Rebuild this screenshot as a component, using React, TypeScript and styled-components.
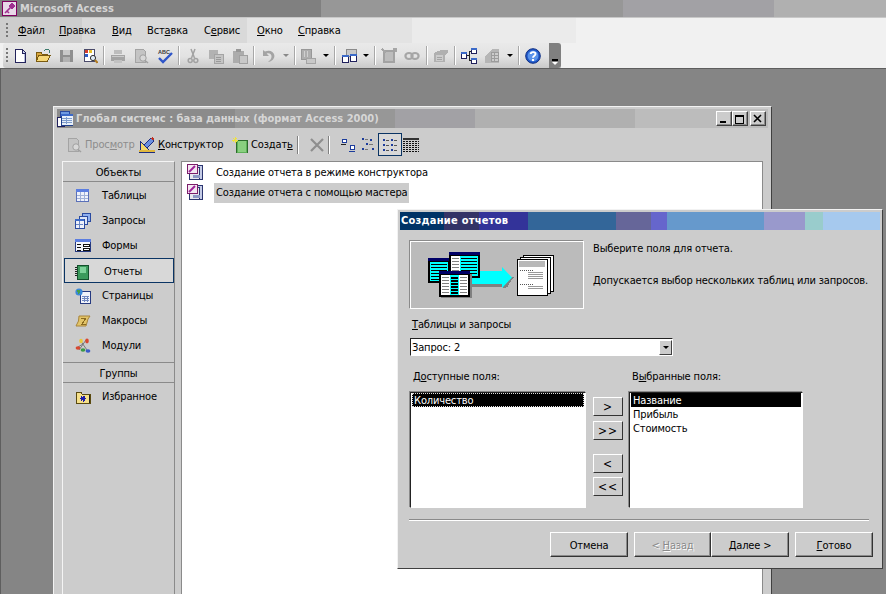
import React from "react";
import styled, { createGlobalStyle } from "styled-components";

const FONT = `"DejaVu Sans Condensed", "DejaVu Sans", "Noto Sans", sans-serif`;

const Global = createGlobalStyle`
  html, body { margin: 0; padding: 0; width: 886px; height: 594px; overflow: hidden; background: #858585; }
  * { box-sizing: border-box; }
  #root { width: 886px; height: 594px; }
`;

/* Hard-edged colour bands of the palette-reduced title bars: [end x, colour] pairs */
const bands = (stops: [number, string][]) => {
  let from = 0;
  const parts = stops.map(([to, c]) => {
    const s = `${c} ${from}px ${to}px`;
    from = to;
    return s;
  });
  return `linear-gradient(90deg, ${parts.join(", ")})`;
};

const Screen = styled.div`
  width: 886px;
  height: 594px;
  display: flex;
  flex-direction: column;
  overflow: hidden;
  font: 11px/14px ${FONT};
  letter-spacing: -0.15px;
  color: #000;
`;

const AppTitle = styled.div`
  height: 17px;
  flex: none;
  display: flex;
  align-items: center;
  gap: 2px;
  padding-left: 2px;
  background: ${bands([[321, "#808080"], [623, "#979797"], [774, "#a2a1a5"], [886, "#b0b0b0"]])};
`;

const AppTitleText = styled.span`
  font: bold 11px/16px ${FONT};
  color: #d4d4d4;
  letter-spacing: 0;
`;

const MenuBar = styled.div`
  height: 26px;
  flex: none;
  display: flex;
  align-items: center;
  padding-left: 6px;
  border-top: 1px solid #c8c8c8;
  background: ${bands([[82, "#cdcdcd"], [247, "#d9d9d9"], [412, "#e3e3e3"], [576, "#ebebeb"], [886, "#f1f1f1"]])};
`;

const Grip = styled.span`
  width: 2px;
  height: 15px;
  flex: none;
  background: repeating-linear-gradient(180deg, #777 0 2px, transparent 2px 4px);
`;

const MenuItem = styled.span<{ $w: number }>`
  width: ${(p) => p.$w}px;
  flex: none;
  text-align: left;
`;

const MenuList = styled.div`
  display: flex;
  margin-left: 10px;
`;

const Key = styled.span`
  text-decoration: underline;
  text-underline-offset: 1px;
`;

const ToolRow = styled.div`
  height: 26px;
  flex: none;
  background: #f1f1f1;
  border-bottom: 1px solid #5e5e5e;
`;

const ToolStrip = styled.div`
  width: 558px;
  height: 25px;
  margin-left: 3px;
  padding-left: 3px;
  display: flex;
  align-items: center;
  border-radius: 3px 0 0 3px;
  background: linear-gradient(180deg, #e9e9e9 0%, #e2e2e2 55%, #c9c9c9 100%);
`;

const ToolBtn = styled.span`
  width: 23.33px;
  height: 22px;
  flex: none;
  display: flex;
  align-items: center;
  justify-content: center;
`;

const ToolSep = styled.span`
  width: 5px;
  height: 19px;
  flex: none;
  &::after {
    content: "";
    display: block;
    width: 1px;
    height: 100%;
    margin: 0 auto;
    background: #a8a8a8;
    box-shadow: 1px 0 0 #fff;
  }
`;

const Drop = styled.span<{ $light?: boolean }>`
  width: 12px;
  height: 22px;
  flex: none;
  display: flex;
  align-items: center;
  justify-content: center;
  &::after {
    content: "";
    border-left: 3px solid transparent;
    border-right: 3px solid transparent;
    border-top: 3px solid ${(p) => (p.$light ? "#888" : "#000")};
  }
`;

const Chevron = styled.span`
  width: 12px;
  height: 25px;
  margin-left: auto;
  flex: none;
  border-radius: 0 3px 3px 0;
  background: #808080;
  display: flex;
  flex-direction: column;
  align-items: center;
  justify-content: flex-end;
  padding-bottom: 3px;
  &::before {
    content: "";
    width: 6px;
    height: 2px;
    background: #000;
    margin-bottom: 1px;
  }
  &::after {
    content: "";
    border-left: 3px solid transparent;
    border-right: 3px solid transparent;
    border-top: 3px solid #fff;
  }
`;

const Desktop = styled.div`
  flex: 1;
  position: relative;
  background: #858585;
  border-left: 1px solid #5e5e5e;
`;

const DbWindow = styled.section`
  position: absolute;
  left: 52px;
  top: 37px;
  width: 719px;
  height: 500px;
  padding: 2px 3px 0;
  background: #cccccc;
  border-top: 1px solid #f2f2f2;
  border-left: 1px solid #f2f2f2;
  border-right: 1px solid #404040;
  display: flex;
  flex-direction: column;
`;

const DbTitle = styled.header`
  height: 19px;
  flex: none;
  display: flex;
  align-items: center;
  padding-right: 2px;
  background: ${bands([[178, "#8b8b8b"], [338, "#979797"], [418, "#a2a1a5"], [578, "#b0b0b0"], [720, "#bcbcbc"]])};
`;

const DbTitleText = styled.span`
  font: bold 11px/16px ${FONT};
  color: #d6d6d6;
  margin-left: 3px;
  white-space: nowrap;
  letter-spacing: 0;
`;

const CaptionGroup = styled.div`
  margin-left: auto;
  display: flex;
`;

const CaptionBtn = styled.span<{ $gap?: number }>`
  width: 16px;
  height: 15px;
  margin-left: ${(p) => p.$gap ?? 0}px;
  background: #cccccc;
  border: 1px solid;
  border-color: #fff #404040 #404040 #fff;
  box-shadow: inset -1px -1px 0 #8a8a8a;
  display: flex;
  align-items: center;
  justify-content: center;
`;

const DbTools = styled.div`
  height: 33px;
  flex: none;
  display: flex;
  align-items: center;
  padding-left: 9px;
`;

const DbTool = styled.span<{ $w: number; $off?: boolean }>`
  width: ${(p) => p.$w}px;
  flex: none;
  display: flex;
  align-items: center;
  gap: 3px;
  color: ${(p) => (p.$off ? "#8c8c8c" : "#000")};
  white-space: nowrap;
`;

const DbSep = styled.span<{ $w: number }>`
  width: ${(p) => p.$w}px;
  height: 18px;
  flex: none;
  &::before {
    content: "";
    display: block;
    width: 1px;
    height: 100%;
    background: #808080;
    box-shadow: 1px 0 0 #fff;
  }
`;

const ViewBtn = styled.span<{ $w: number; $on?: boolean }>`
  width: ${(p) => p.$w}px;
  height: 23px;
  flex: none;
  display: flex;
  align-items: center;
  justify-content: center;
  border: 1px solid ${(p) => (p.$on ? "#0a3464" : "transparent")};
  background: ${(p) => (p.$on ? "#d8d8d8" : "transparent")};
`;

const DbBody = styled.div`
  flex: 1;
  display: flex;
  gap: 6px;
  padding: 0 5px;
`;

const Panel = styled.nav`
  width: 113px;
  flex: none;
  border-top: 1px solid #f4f4f4;
  border-left: 1px solid #f4f4f4;
  border-right: 1px solid #8a8a8a;
  display: flex;
  flex-direction: column;
`;

const PanelHead = styled.div<{ $top?: boolean }>`
  height: ${(p) => (p.$top ? 20 : 21)}px;
  flex: none;
  display: flex;
  align-items: center;
  justify-content: center;
  padding-top: 2px;
  border-bottom: 1px solid #8a8a8a;
  ${(p) => (p.$top ? "" : "border-top: 1px solid #8a8a8a; margin-top: 4px;")}
`;

const PanelItems = styled.div<{ $first?: boolean }>`
  padding-top: ${(p) => (p.$first ? 1 : 0)}px;
  display: flex;
  flex-direction: column;
`;

const PanelItem = styled.div<{ $on?: boolean; $low?: boolean }>`
  height: 25px;
  display: flex;
  align-items: center;
  padding-left: ${(p) => (p.$on ? 9 : 11)}px;
  padding-top: ${(p) => (p.$low ? 2 : 0)}px;
  gap: ${(p) => (p.$on ? 14 : 11)}px;
  margin-left: ${(p) => (p.$on ? 1 : 0)}px;
  border: 1px solid ${(p) => (p.$on ? "#0a3464" : "transparent")};
  background: ${(p) => (p.$on ? "#d8d8d8" : "transparent")};
`;

const ListPane = styled.div`
  flex: 1;
  background: #fff;
  border-top: 1px solid #8a8a8a;
  border-left: 1px solid #8a8a8a;
  border-right: 1px solid #8a8a8a;
  padding: 1px 0 0 5px;
  display: flex;
  flex-direction: column;
`;

const ListRow = styled.div`
  height: 20px;
  display: flex;
  align-items: center;
  gap: 12px;
`;

const RowIcon = styled.span`
  display: block;
  margin-top: -3px;
`;

const RowLabel = styled.span<{ $on?: boolean }>`
  height: 20px;
  line-height: 20px;
  padding: 0 2px;
  margin-left: -1px;
  white-space: nowrap;
  background: ${(p) => (p.$on ? "#cccccc" : "transparent")};
`;

const Wizard = styled.section`
  position: absolute;
  left: 396px;
  top: 140px;
  width: 486px;
  height: 360px;
  padding: 2px;
  background: #cccccc;
  border: 1px solid;
  border-color: #f2f2f2 #404040 #404040 #f2f2f2;
  display: flex;
  flex-direction: column;
`;

const WizardTitle = styled.header`
  height: 18px;
  flex: none;
  display: flex;
  align-items: center;
  padding-left: 1px;
  font: bold 11px/14px ${FONT};
  letter-spacing: 0.25px;
  color: #fff;
  background: ${bands([[44, "#003366"], [79, "#333366"], [128, "#333399"], [216, "#336699"], [251, "#666699"], [267, "#6666cc"], [364, "#6699cc"], [405, "#9999cc"], [423, "#99cccc"], [480, "#a6c9ee"]])};
`;

const WizardBody = styled.div`
  flex: 1;
  padding: 10px 0 0 9px;
  display: flex;
  flex-direction: column;
`;

const IntroRow = styled.div`
  display: flex;
  gap: 9px;
  height: 69px;
`;

const Picture = styled.div`
  width: 175px;
  height: 69px;
  flex: none;
  background: #bbbbbb;
  border: 1px solid;
  border-color: #8a8a8a #fff #fff #8a8a8a;
  box-shadow: inset 1px 1px 0 #fff;
`;

const IntroText = styled.div`
  display: flex;
  flex-direction: column;
  gap: 16px;
  padding-top: 1px;
  line-height: 16px;
`;

const Caption = styled.label<{ $mt: number }>`
  display: block;
  height: 16px;
  margin-top: ${(p) => p.$mt}px;
  padding-left: 3px;
  line-height: 18px;
`;

const Combo = styled.div`
  margin: 6px 0 0 1px;
  width: 263px;
  height: 18px;
  flex: none;
  background: #fff;
  border: 1px solid;
  border-color: #222 #fff #fff #222;
  display: flex;
  align-items: center;
  padding-left: 1px;
`;

const ComboText = styled.span`
  line-height: 15px;
`;

const ComboBtn = styled.span`
  margin-left: auto;
  width: 13px;
  height: 15px;
  background: #cccccc;
  border: 1px solid;
  border-color: #fff #404040 #404040 #fff;
  display: flex;
  align-items: center;
  justify-content: center;
  &::after {
    content: "";
    border-left: 3px solid transparent;
    border-right: 3px solid transparent;
    border-top: 3px solid #000;
  }
`;

const Fields = styled.div`
  margin: 12px 0 0 1px;
  display: grid;
  grid-template-columns: 176px 43px 174px;
  grid-template-rows: 24px 116px;
`;

const FieldCaption = styled.label`
  line-height: 18px;
  height: 16px;
  padding-left: 3px;
`;

const FieldList = styled.div`
  background: #fff;
  border: 1px solid;
  border-color: #222 #fff #fff #222;
  padding: 0 1px;
  box-shadow: -1px -1px 0 #8a8a8a;
  display: flex;
  flex-direction: column;
`;

const FieldRow = styled.div<{ $on?: boolean; $focus?: boolean }>`
  height: 14px;
  line-height: 16px;
  overflow: hidden;
  padding-left: 2px;
  color: ${(p) => (p.$on ? "#fff" : "#000")};
  background: ${(p) => (p.$on ? "#000" : "transparent")};
  ${(p) => (p.$focus ? "outline: 1px dotted #ddd; outline-offset: -1px;" : "")}
`;

const MoveColumn = styled.div`
  padding: 5px 0 0 7px;
  display: flex;
  flex-direction: column;
`;

const MoveBtn = styled.span<{ $mt: number }>`
  width: 30px;
  height: 19px;
  margin-top: ${(p) => p.$mt}px;
  padding-top: 1px;
  background: #cccccc;
  border: 1px solid;
  border-color: #fff #333 #333 #fff;
  display: flex;
  align-items: center;
  justify-content: center;
  font-size: 12px;
  letter-spacing: 1px;
`;

const Rule = styled.hr`
  width: 460px;
  height: 2px;
  margin: 11px 0 0;
  border: 0;
  background: linear-gradient(180deg, #8a8a8a 50%, #fff 50%);
  flex: none;
`;

const Actions = styled.div`
  margin: 11px 0 0 141px;
  display: flex;
`;

const ActionBtn = styled.span<{ $w: number; $gap?: number; $off?: boolean }>`
  width: ${(p) => p.$w}px;
  height: 25px;
  margin-left: ${(p) => p.$gap ?? 0}px;
  padding-top: 2px;
  flex: none;
  background: #cccccc;
  border: 1px solid;
  border-color: #fff #333 #333 #fff;
  box-shadow: inset -1px -1px 0 #8a8a8a;
  display: flex;
  align-items: center;
  justify-content: center;
  color: ${(p) => (p.$off ? "#8a8a8a" : "#000")};
  text-shadow: ${(p) => (p.$off ? "1px 1px 0 #fff" : "none")};
`;

const Glyph = styled.svg.attrs({ xmlns: "http://www.w3.org/2000/svg" })<{ $s?: number }>`
  width: ${(p) => p.$s ?? 16}px;
  height: ${(p) => p.$s ?? 16}px;
  flex: none;
  display: block;
  shape-rendering: crispEdges;
`;

const I: React.FC<{ children: React.ReactNode }> = ({ children }) => <Glyph viewBox="0 0 16 16">{children}</Glyph>;

const AppKey = () => (
  <I>
    <rect x="0.5" y="0.5" width="14" height="14" fill="#e8d8e8" stroke="#800060" />
    <circle cx="10" cy="5" r="2.6" fill="#a03090" />
    <path d="M9 6 L3 12 M5 10 L7 12" stroke="#a03090" strokeWidth="1.6" fill="none" style={{ shapeRendering: "auto" }} />
  </I>
);
const IcNew = () => (
  <I>
    <path d="M3.5 1.5H10L13.5 5V14.5H3.5Z" fill="#fff" stroke="#24245c" />
    <path d="M10 1.5V5H13.5" fill="#cfd6ef" stroke="#24245c" />
    <path d="M12 6h1v8h-1z" fill="#b9c0de" />
  </I>
);
const IcOpen = () => (
  <I>
    <path d="M1 13V4.5H6L7 6H12.5V13Z" fill="#d9a63c" stroke="#7a5a10" />
    <path d="M1.5 13.5L3.5 7.5H15L12.5 13.5Z" fill="#f7d877" stroke="#7a5a10" />
    <path d="M9 3L11 1.5L14 2V5" fill="none" stroke="#3c7a6c" />
  </I>
);
const IcSave = () => (
  <I>
    <rect x="2" y="2" width="13" height="12" fill="#8f8f8f" />
    <rect x="5" y="2" width="7" height="5" fill="#c8c8c8" />
    <rect x="5" y="9" width="7" height="5" fill="#b2b2b2" />
  </I>
);
const IcSearchDoc = () => (
  <I>
    <path d="M2.5 1.5H12.5V13.5H2.5Z" fill="#fff" stroke="#4a4a6a" />
    <rect x="3" y="2" width="3" height="3" fill="#d23c2c" />
    <rect x="7" y="2" width="3" height="3" fill="#e8c02c" />
    <rect x="3" y="6" width="3" height="3" fill="#2c5cc8" />
    <circle cx="11" cy="10" r="2.6" fill="#dfeaf5" stroke="#333" style={{ shapeRendering: "auto" }} />
    <path d="M13 12L15.5 14.8" stroke="#b07a20" strokeWidth="2" style={{ shapeRendering: "auto" }} />
  </I>
);
const IcPrint = () => (
  <I>
    <path d="M4 2H12V6H4Z" fill="#bdbdbd" />
    <path d="M1 7H15V13H1Z" fill="#a4a4a4" />
    <path d="M2 8H14V9H2Z" fill="#cacaca" />
    <path d="M4 12H12V15H4Z" fill="#c2c2c2" />
  </I>
);
const IcPreview = () => (
  <I>
    <path d="M2 1H10L12 3V14H2Z" fill="#c4c4c4" stroke="#a4a4a4" />
    <circle cx="10" cy="10" r="3.2" fill="#d8d8d8" stroke="#a0a0a0" style={{ shapeRendering: "auto" }} />
    <path d="M12 12.5L15 15" stroke="#a0a0a0" strokeWidth="1.6" style={{ shapeRendering: "auto" }} />
  </I>
);
const SpellText = styled.text`
  font: bold 5.5px "Liberation Sans", sans-serif;
  letter-spacing: 0;
`;
const IcSpell = () => (
  <I>
    <SpellText x="1" y="5.5" fill="#3a3a3a">ABC</SpellText>
    <path d="M2 10L6 14L15 5" fill="none" stroke="#2f56c8" strokeWidth="2.4" style={{ shapeRendering: "auto" }} />
  </I>
);
const IcCut = () => (
  <I>
    <g fill="none" stroke="#a2a2a2" strokeWidth="1.5" style={{ shapeRendering: "auto" }}>
      <path d="M6 1L9.5 10M10 1L6.5 10" />
      <circle cx="5.2" cy="12.5" r="2" />
      <circle cx="10.8" cy="12.5" r="2" />
    </g>
  </I>
);
const IcCopy = () => (
  <I>
    <rect x="1" y="2" width="9" height="9" fill="#b2b2b2" />
    <rect x="6" y="6" width="9" height="9" fill="#c4c4c4" stroke="#a4a4a4" />
    <path d="M8 9h5M8 11h5M8 13h5" stroke="#9a9a9a" />
  </I>
);
const IcPaste = () => (
  <I>
    <rect x="1" y="3" width="11" height="12" fill="#acacac" />
    <rect x="4" y="1" width="5" height="3" fill="#989898" />
    <rect x="7" y="7" width="8" height="8" fill="#c8c8c8" stroke="#a0a0a0" />
  </I>
);
const IcUndo = () => (
  <I>
    <path d="M3 2V8H9L6.6 5.6C9 4.6 12 6 11.5 9C11.2 11 10 12.5 8 14C12 13.5 15 10.5 14.3 7C13.5 3 9 1.5 5 3.6Z" fill="#a4a4a4" style={{ shapeRendering: "auto" }} />
  </I>
);
const IcGridDrop = () => (
  <I>
    <rect x="1" y="1" width="10" height="10" fill="#aeaeae" stroke="#989898" />
    <path d="M4 3v6M7 3v6" stroke="#d0d0d0" />
    <rect x="6" y="10" width="9" height="5" fill="#c8c8c8" stroke="#a4a4a4" />
  </I>
);
const Mini = ({ x, y, w = 6, h = 6 }: { x: number; y: number; w?: number; h?: number }) => (
  <g>
    <rect x={x + 0.5} y={y + 0.5} width={w} height={h} fill="#fff" stroke="#20205c" />
    <rect x={x} y={y} width={w + 1} height="2" fill="#3c6ac8" />
  </g>
);
const IcTables = () => (
  <I>
    <rect x="5" y="1" width="10" height="7" fill="#c8c8c8" stroke="#8a8a8a" />
    <Mini x={1} y={7} w={6} h={7} />
    <Mini x={9} y={6} w={6} h={7} />
  </I>
);
const IcClockOff = () => (
  <I>
    <path d="M3 3H13V14H3Z" fill="#bcbcbc" stroke="#a2a2a2" strokeWidth="2" />
    <path d="M1 1L5 5M12 1H15V4" stroke="#a6a6a6" strokeWidth="2" fill="none" />
  </I>
);
const IcLinks = () => (
  <I>
    <g fill="none" stroke="#a6a6a6" strokeWidth="2.2" style={{ shapeRendering: "auto" }}>
      <ellipse cx="5" cy="8" rx="3.6" ry="3" />
      <ellipse cx="11" cy="8" rx="3.6" ry="3" />
    </g>
  </I>
);
const IcPropsOff = () => (
  <I>
    <path d="M1 5L8 2H15V5L12 7V14H1Z" fill="#b0b0b0" />
    <path d="M3 7H10V13H3Z" fill="#cccccc" />
    <path d="M4 9h5M4 11h5" stroke="#a4a4a4" />
  </I>
);
const IcRelate = () => (
  <I>
    <Mini x={0} y={4} w={5} h={6} />
    <Mini x={10} y={0} w={5} h={5} />
    <Mini x={10} y={10} w={5} h={5} />
    <path d="M6 7H8V3H10M8 7V12H10" fill="none" stroke="#222" />
  </I>
);
const IcNewObjOff = () => (
  <I>
    <path d="M1 8L8 1H15V15H1Z" fill="#b6b6b6" />
    <path d="M7 4h7v9H7z" fill="#cccccc" stroke="#9c9c9c" />
    <path d="M7 7h7M7 10h7M10 4v9" stroke="#9c9c9c" />
  </I>
);
const IcHelp = () => (
  <Glyph viewBox="0 0 16 16">
    <circle cx="8" cy="8" r="7.3" fill="#1f58c8" stroke="#0f2f84" style={{ shapeRendering: "auto" }} />
    <circle cx="8" cy="8" r="5.4" fill="#5a93ea" style={{ shapeRendering: "auto" }} />
    <path d="M5.7 6C5.9 3.5 10.5 3.5 10.5 6C10.5 7.8 8 7.6 8 9.8" fill="none" stroke="#fff" strokeWidth="1.9" style={{ shapeRendering: "auto" }} />
    <rect x="7" y="11" width="2" height="2" fill="#fff" />
  </Glyph>
);
const DbIcon = () => (
  <I>
    <rect x="3" y="0" width="9" height="8" fill="#6f9ae0" stroke="#2a4aa0" />
    <rect x="0" y="6" width="7" height="9" fill="#fff" stroke="#20205c" />
    <rect x="4" y="3" width="12" height="11" fill="#e8f0fa" stroke="#20408c" />
    <rect x="4" y="3" width="12" height="2" fill="#3c6ac8" />
    <path d="M5 7h10M5 9h10M5 11h10M9 6v7" stroke="#7e9ccc" />
  </I>
);
const IcMin = () => <Glyph $s={10} viewBox="0 0 10 10"><rect x="1" y="7" width="6" height="2" fill="#000" /></Glyph>;
const IcMax = () => <Glyph $s={10} viewBox="0 0 10 10"><path d="M0.5 1.5H8.5V9.5H0.5Z" fill="none" stroke="#000" /><rect x="0" y="1" width="9" height="2" fill="#000" /></Glyph>;
const IcClose = () => <Glyph $s={10} viewBox="0 0 10 10"><path d="M1 1L8 8M8 1L1 8" stroke="#000" strokeWidth="1.6" style={{ shapeRendering: "auto" }} /></Glyph>;
const IcDesign = () => (
  <I>
    <path d="M1 13V4L10 13Z" fill="#f4d76a" stroke="#1c2c80" />
    <path d="M5 8L12 1L15 4L8 11Z" fill="#6a8fe0" stroke="#1c2c80" />
    <path d="M13 1L15 3" stroke="#c03020" strokeWidth="2" />
    <rect x="0" y="13" width="16" height="3" fill="#e0b840" />
    <path d="M0 15.5H16" stroke="#1c2c80" />
  </I>
);
const IcCreate = () => (
  <I>
    <rect x="4" y="3" width="11" height="13" fill="#5fb05a" stroke="#2c6c2c" />
    <rect x="6" y="4" width="8" height="11" fill="#8ad080" />
    <path d="M3 0v6M0 3h6M1 1l4 4M5 1L1 5" stroke="#efe240" />
  </I>
);
const IcDelete = () => (
  <I>
    <path d="M2 2L14 14M14 2L2 14" stroke="#8e8e8e" strokeWidth="2.2" style={{ shapeRendering: "auto" }} />
  </I>
);
const IcLarge = () => (
  <I>
    <rect x="2" y="2" width="4" height="3" fill="#fff" stroke="#1c3c9c" />
    <path d="M1 7H6" stroke="#222" />
    <rect x="10" y="8" width="4" height="4" fill="#fff" stroke="#1c3c9c" />
    <path d="M9 14H15" stroke="#1c3c9c" />
  </I>
);
const IcSmall = () => (
  <I>
    <g fill="#1c3c9c">
      <rect x="1" y="1" width="2" height="2" />
      <rect x="5" y="6" width="2" height="2" />
      <rect x="1" y="11" width="2" height="2" />
    </g>
    <path d="M4 2h3M8 7h4M4 12h3" stroke="#777" />
    <rect x="9" y="2" width="2" height="2" fill="#1c3c9c" />
    <rect x="11" y="11" width="2" height="2" fill="#1c3c9c" />
  </I>
);
const IcList = () => (
  <I>
    {[2, 7, 12].map((y) => (
      <g key={y}>
        <rect x="1" y={y} width="2" height="2" fill="#1c3c9c" />
        <path d={`M4 ${y + 1}H7`} stroke="#555" />
        <rect x="9" y={y} width="2" height="2" fill="#1c3c9c" />
        <path d={`M12 ${y + 1}H15`} stroke="#555" />
      </g>
    ))}
  </I>
);
const IcDetail = () => (
  <I>
    {[2, 4, 6, 8, 10, 12, 14].map((y) => (
      <path key={y} d={`M0 ${y + 0.5}H16`} stroke="#111" strokeDasharray="2 1" />
    ))}
    <rect x="0" y="1" width="16" height="2" fill="#333" />
  </I>
);
const IcReport = () => (
  <I>
    <rect x="5" y="1" width="10" height="14" fill="#c5cce6" stroke="#2c3670" />
    <rect x="2" y="3" width="10" height="12" fill="#e8e8ee" stroke="#2c3670" />
    <rect x="0.5" y="0.5" width="10" height="9" fill="#f4e8f2" stroke="#7c1e6a" />
    <path d="M2 8L8 2" stroke="#a0209a" strokeWidth="2" style={{ shapeRendering: "auto" }} />
    <rect x="6" y="11" width="7" height="3" fill="#8e98c4" />
  </I>
);
const PTable = () => (
  <I>
    <rect x="1.5" y="1.5" width="12" height="12" fill="#eef1fa" stroke="#5a70b8" />
    <rect x="1" y="1" width="13" height="3" fill="#5b7de0" />
    <path d="M2 7H13M2 10H13M5.5 4V13M9.5 4V13" stroke="#9fb0d8" />
  </I>
);
const PQuery = () => (
  <I>
    <rect x="7" y="0" width="8" height="8" fill="#8fb0ef" stroke="#2a4aa0" />
    <rect x="4" y="3" width="8" height="8" fill="#dbe4f6" stroke="#2a4aa0" />
    <rect x="0" y="6" width="9" height="9" fill="#eef1fa" stroke="#2a4aa0" />
    <rect x="0" y="6" width="9" height="2" fill="#3c6ac8" />
    <path d="M1 11H8M4 8V15" stroke="#6a86c4" />
  </I>
);
const PForm = () => (
  <I>
    <rect x="0.5" y="1.5" width="15" height="12" fill="#f4f6fb" stroke="#263a80" />
    <rect x="0" y="1" width="16" height="3" fill="#5b7de0" />
    <path d="M2 6H6M2 9H6M2 12H6" stroke="#111" />
    <path d="M8.5 6.5H14V8.5H8.5ZM8.5 10.5H14V12.5H8.5Z" fill="#fff" stroke="#111" />
  </I>
);
const PReport = () => (
  <I>
    <rect x="3" y="1" width="11" height="14" fill="#3b9a5c" stroke="#14502c" />
    <rect x="6" y="3" width="6" height="6" fill="#7ed29a" />
    <path d="M2 3v10" stroke="#222" strokeWidth="2" strokeDasharray="1 1" />
  </I>
);
const PPage = () => (
  <I>
    <rect x="5.5" y="3.5" width="10" height="12" fill="#f0f3fa" stroke="#263a80" />
    <path d="M7 8H14M7 10H14M7 12H14M9 8V14M12 8V14" stroke="#7088c0" />
    <circle cx="4" cy="4" r="3.6" fill="#3c88d8" style={{ shapeRendering: "auto" }} />
    <path d="M2 2.5L5 2L5 5L3 6Z" fill="#45a047" />
  </I>
);
const PMacro = () => (
  <I>
    <path d="M4 3H15L13 6L11 13H1L3.5 8Z" fill="#e2c468" stroke="#a8843a" style={{ shapeRendering: "auto" }} />
    <path d="M6 5H11L7 11H11" stroke="#8a6a20" fill="none" />
  </I>
);
const PModule = () => (
  <Glyph viewBox="0 0 16 16" style={{ shapeRendering: "auto" }}>
    <path d="M4 12L11 2M12 12L5 2M8 6L3 9" stroke="#7a7a7a" fill="none" />
    <ellipse cx="3" cy="10" rx="2.4" ry="1.8" fill="#d84830" />
    <ellipse cx="8" cy="12" rx="2.4" ry="1.8" fill="#3c9a48" />
    <ellipse cx="13" cy="13" rx="2.4" ry="1.8" fill="#3c5cc8" />
    <ellipse cx="12" cy="3" rx="1.8" ry="2.4" fill="#d84830" />
    <ellipse cx="6" cy="3" rx="1.8" ry="2.2" fill="#e8c840" />
  </Glyph>
);
const PFav = () => (
  <I>
    <path d="M1 14V3H6L7 5H15V14Z" fill="#f6e08a" stroke="#5a4a10" />
    <path d="M15 5V14H14V6Z" fill="#222" />
    <path d="M8 6.5v6M5 9.5h6M6 7.5l4 4M10 7.5l-4 4" stroke="#1c1ca8" />
  </I>
);

const WizardArt = () => (
  <svg viewBox="410 241 173 67" width="173" height="67" style={{ display: "block", shapeRendering: "crispEdges" }}>
    <rect x="472" y="284" width="36" height="3" fill="#808080" />
    <path d="M511 277L503 288H506L514 277Z" fill="#808080" />
    <rect x="471" y="271" width="33" height="13" fill="#00ffff" />
    <path d="M502 267L512 277.5L502 288Z" fill="#00ffff" style={{ shapeRendering: "auto" }} />
    <g>
      <rect x="428" y="258" width="22" height="25" fill="#000" />
      <rect x="428" y="258" width="22" height="3" fill="#000066" />
      <rect x="430" y="262" width="18" height="19" fill="#00ffff" />
      {[264, 267, 270, 273, 276, 279].map((y) => (
        <rect key={y} x="431" y={y} width="16" height="1" fill="#000" />
      ))}
    </g>
    <g>
      <rect x="449" y="252" width="31" height="26" fill="#000" />
      <rect x="449" y="252" width="31" height="3" fill="#000066" />
      <rect x="451" y="256" width="27" height="20" fill="#fff" />
      <rect x="460" y="256" width="18" height="20" fill="#00ffff" />
      {[258, 261, 264, 267, 270, 273].map((y) => (
        <g key={y}>
          <rect x="452" y={y} width="7" height="1" fill="#808080" />
          <rect x="461" y={y} width="16" height="1" fill="#000" />
        </g>
      ))}
    </g>
    <g>
      <rect x="441" y="274" width="31" height="24" fill="#808080" />
      <rect x="439" y="271" width="31" height="26" fill="#000" />
      <rect x="439" y="271" width="31" height="3" fill="#000066" />
      <rect x="441" y="275" width="27" height="20" fill="#fff" />
      <rect x="450" y="275" width="9" height="20" fill="#00ffff" />
      {[277, 280, 283, 286, 289, 292].map((y) => (
        <g key={y}>
          <rect x="442" y={y} width="7" height="1" fill="#808080" />
          <rect x="451" y={y} width="7" height="2" fill="#000" />
          <rect x="460" y={y} width="7" height="1" fill="#808080" />
        </g>
      ))}
    </g>
    <rect x="523" y="255" width="30" height="36" fill="#fff" stroke="#000" />
    <rect x="520" y="257" width="30" height="36" fill="#fff" stroke="#000" />
    <rect x="517" y="259" width="30" height="36" fill="#fff" stroke="#000" />
    <rect x="519" y="261" width="26" height="6" fill="#b8b8b8" />
    <path d="M520 270h13M520 284h13" stroke="#555" strokeDasharray="1 1" />
    {[272, 274, 276, 278, 286, 288].map((y) => (
      <rect key={y} x="528" y={y} width="15" height="1" fill="#999" />
    ))}
  </svg>
);

const MENU: [string, string, string, number][] = [
  ["", "Ф", "айл", 41],
  ["", "П", "равка", 53],
  ["", "В", "ид", 35],
  ["Вст", "а", "вка", 57],
  ["С", "е", "рвис", 53],
  ["", "О", "кно", 41],
  ["", "С", "правка", 60],
];

const NAV: [string, React.FC, boolean?][] = [
  ["Таблицы", PTable],
  ["Запросы", PQuery],
  ["Формы", PForm],
  ["Отчеты", PReport, true],
  ["Страницы", PPage],
  ["Макросы", PMacro],
  ["Модули", PModule],
];

export default function App() {
  return (
    <Screen>
      <Global />
      <AppTitle>
        <AppKey />
        <AppTitleText>Microsoft Access</AppTitleText>
      </AppTitle>
      <MenuBar>
        <Grip />
        <MenuList>
          {MENU.map(([a, k, b, w]) => (
            <MenuItem key={a + k + b} $w={w}>
              {a}
              <Key>{k}</Key>
              {b}
            </MenuItem>
          ))}
        </MenuList>
      </MenuBar>
      <ToolRow>
        <ToolStrip>
          <Grip />
          <ToolBtn><IcNew /></ToolBtn>
          <ToolBtn><IcOpen /></ToolBtn>
          <ToolBtn><IcSave /></ToolBtn>
          <ToolBtn><IcSearchDoc /></ToolBtn>
          <ToolSep />
          <ToolBtn><IcPrint /></ToolBtn>
          <ToolBtn><IcPreview /></ToolBtn>
          <ToolBtn><IcSpell /></ToolBtn>
          <ToolSep />
          <ToolBtn><IcCut /></ToolBtn>
          <ToolBtn><IcCopy /></ToolBtn>
          <ToolBtn><IcPaste /></ToolBtn>
          <ToolSep />
          <ToolBtn><IcUndo /></ToolBtn>
          <Drop $light />
          <ToolSep />
          <ToolBtn><IcGridDrop /></ToolBtn>
          <Drop />
          <ToolSep />
          <ToolBtn><IcTables /></ToolBtn>
          <Drop />
          <ToolSep />
          <ToolBtn><IcClockOff /></ToolBtn>
          <ToolBtn><IcLinks /></ToolBtn>
          <ToolSep />
          <ToolBtn><IcPropsOff /></ToolBtn>
          <ToolSep />
          <ToolBtn><IcRelate /></ToolBtn>
          <ToolBtn><IcNewObjOff /></ToolBtn>
          <Drop />
          <ToolSep />
          <ToolBtn><IcHelp /></ToolBtn>
          <Chevron />
        </ToolStrip>
      </ToolRow>
      <Desktop>
        <DbWindow>
          <DbTitle>
            <DbIcon />
            <DbTitleText>Глобал системс : база данных (формат Access 2000)</DbTitleText>
            <CaptionGroup>
              <CaptionBtn><IcMin /></CaptionBtn>
              <CaptionBtn><IcMax /></CaptionBtn>
              <CaptionBtn $gap={2}><IcClose /></CaptionBtn>
            </CaptionGroup>
          </DbTitle>
          <DbTools>
            <DbTool $w={73} $off><IcPreview /><span>Прос<Key>м</Key>отр</span></DbTool>
            <DbTool $w={93}><IcDesign /><span><Key>К</Key>онструктор</span></DbTool>
            <DbTool $w={65}><IcCreate /><span>Создат<Key>ь</Key></span></DbTool>
            <DbSep $w={9} />
            <ViewBtn $w={22}><IcDelete /></ViewBtn>
            <DbSep $w={9} />
            <ViewBtn $w={22}><IcLarge /></ViewBtn>
            <ViewBtn $w={19}><IcSmall /></ViewBtn>
            <ViewBtn $w={24} $on><IcList /></ViewBtn>
            <ViewBtn $w={18}><IcDetail /></ViewBtn>
          </DbTools>
          <DbBody>
            <Panel>
              <PanelHead $top>Объекты</PanelHead>
              <PanelItems $first>
                {NAV.map(([label, Ic, on]) => (
                  <PanelItem key={label} $on={on} $low={on}>
                    <Ic />
                    <span>{label}</span>
                  </PanelItem>
                ))}
              </PanelItems>
              <PanelHead>Группы</PanelHead>
              <PanelItems>
                <PanelItem $low>
                  <PFav />
                  <span>Избранное</span>
                </PanelItem>
              </PanelItems>
            </Panel>
            <ListPane>
              <ListRow>
                <RowIcon><IcReport /></RowIcon>
                <RowLabel>Создание отчета в режиме конструктора</RowLabel>
              </ListRow>
              <ListRow>
                <RowIcon><IcReport /></RowIcon>
                <RowLabel $on>Создание отчета с помощью мастера</RowLabel>
              </ListRow>
            </ListPane>
          </DbBody>
        </DbWindow>
        <Wizard>
          <WizardTitle>Создание отчетов</WizardTitle>
          <WizardBody>
            <IntroRow>
              <Picture><WizardArt /></Picture>
              <IntroText>
                <span>Выберите поля для отчета.</span>
                <span>Допускается выбор нескольких таблиц или запросов.</span>
              </IntroText>
            </IntroRow>
            <Caption $mt={7}><Key>Т</Key>аблицы и запросы</Caption>
            <Combo>
              <ComboText>Запрос: 2</ComboText>
              <ComboBtn />
            </Combo>
            <Fields>
              <FieldCaption>Д<Key>о</Key>ступные поля:</FieldCaption>
              <span />
              <FieldCaption>В<Key>ы</Key>бранные поля:</FieldCaption>
              <FieldList>
                <FieldRow $on $focus>Количество</FieldRow>
              </FieldList>
              <MoveColumn>
                <MoveBtn $mt={0}>&gt;</MoveBtn>
                <MoveBtn $mt={5}>&gt;&gt;</MoveBtn>
                <MoveBtn $mt={14}>&lt;</MoveBtn>
                <MoveBtn $mt={4}>&lt;&lt;</MoveBtn>
              </MoveColumn>
              <FieldList>
                <FieldRow $on>Название</FieldRow>
                <FieldRow>Прибыль</FieldRow>
                <FieldRow>Стоимость</FieldRow>
              </FieldList>
            </Fields>
            <Rule />
            <Actions>
              <ActionBtn $w={78}><span>Отмена</span></ActionBtn>
              <ActionBtn $w={77} $gap={6} $off><span>&lt; <Key>Н</Key>азад</span></ActionBtn>
              <ActionBtn $w={78}><span><Key>Д</Key>алее &gt;</span></ActionBtn>
              <ActionBtn $w={78} $gap={6}><span><Key>Г</Key>отово</span></ActionBtn>
            </Actions>
          </WizardBody>
        </Wizard>
      </Desktop>
    </Screen>
  );
}
